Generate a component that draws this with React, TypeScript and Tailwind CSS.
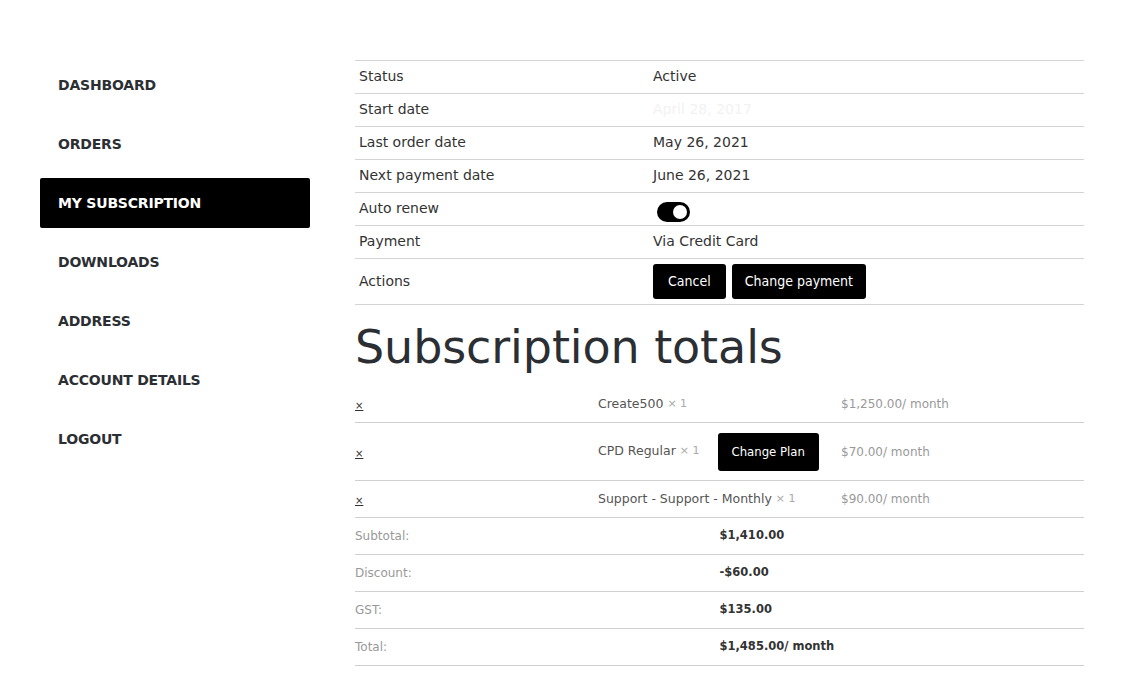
import React from 'react';

const NAV_ITEMS = ['Dashboard', 'Orders', 'My Subscription', 'Downloads', 'Address', 'Account details', 'Logout'];

const DETAILS: { label: string; value: React.ReactNode }[] = [
  { label: 'Status', value: 'Active' },
  { label: 'Start date', value: <span className="text-[#f2f2f2]">April 28, 2017</span> },
  { label: 'Last order date', value: 'May 26, 2021' },
  { label: 'Next payment date', value: 'June 26, 2021' },
  { label: 'Auto renew', value: <Toggle /> },
  { label: 'Payment', value: 'Via Credit Card' },
];

const LINES = [
  { name: 'Create500', price: '$1,250.00', plan: false },
  { name: 'CPD Regular', price: '$70.00', plan: true },
  { name: 'Support - Support - Monthly', price: '$90.00', plan: false },
];

const TOTALS = [
  { label: 'Subtotal:', value: '$1,410.00' },
  { label: 'Discount:', value: '-$60.00' },
  { label: 'GST:', value: '$135.00' },
  { label: 'Total:', value: '$1,485.00/ month' },
];

const BODY_FONT = 'font-["DejaVu_Sans",sans-serif]';
const BTN_FONT = 'font-["Liberation_Sans_Narrow","DejaVu_Sans_Condensed",sans-serif]';

function Toggle(): React.ReactElement {
  return (
    <span className="mt-[9px] ml-[4px] flex h-[20px] w-[33px] items-center justify-end rounded-full bg-black px-[3px]">
      <span className="h-[14px] w-[14px] rounded-full bg-white" />
    </span>
  );
}

function Button({ children, className = '' }: { children: React.ReactNode; className?: string }): React.ReactElement {
  return (
    <button className={`${BTN_FONT} rounded-[3px] bg-black text-white ${className}`}>{children}</button>
  );
}

export default function App(): React.ReactElement {
  return (
    <div className={`${BODY_FONT} min-h-[693px] bg-white pt-[60px] text-[#2b2f33]`}>
      <div className="flex gap-[45px] pl-[40px]">
        {/* sidebar */}
        <nav className="flex w-[270px] shrink-0 flex-col gap-[9px]">
          {NAV_ITEMS.map((item) => {
            const active = item === 'My Subscription';
            return (
              <div
                key={item}
                className={`flex h-[50px] items-center rounded-[2px] pl-[18px] text-[14px] font-bold uppercase tracking-[-0.2px] ${
                  active ? 'bg-black text-white' : 'text-[#2b2f33]'
                }`}
              >
                {item}
              </div>
            );
          })}
        </nav>

        {/* main */}
        <main className="w-[729px]">
          <div className="border-t border-[#d4d4d4]">
            {DETAILS.map((row) => (
              <div key={row.label} className="flex h-[33px] border-b border-[#d4d4d4] text-[14px] leading-[30px] text-[#333]">
                <div className="w-[294px] shrink-0 pl-[4px]">{row.label}</div>
                <div className="pl-[4px]">{row.value}</div>
              </div>
            ))}
            <div className="flex h-[46px] items-center border-b border-[#d4d4d4] text-[14px] text-[#333]">
              <div className="w-[294px] shrink-0 pl-[4px]">Actions</div>
              <div className="flex gap-[6px] pl-[4px]">
                <Button className="h-[35px] px-[15px] text-[14px]">Cancel</Button>
                <Button className="h-[35px] px-[13px] text-[14px]">Change payment</Button>
              </div>
            </div>
          </div>

          <h2 className="mt-[14px] text-[46px] leading-[56px] font-normal tracking-[-0.1px] text-[#2b2f33]">Subscription totals</h2>

          <div className="mt-[11px]">
            {LINES.map((line) => (
              <div
                key={line.name}
                className={`grid grid-cols-3 items-center border-b border-[#d0d0d0] ${line.plan ? 'h-[58px]' : 'h-[37px]'}`}
              >
                <div>
                  <span className="text-[10px] text-[#333] underline">×</span>
                </div>
                <div className="flex items-center text-[12.5px] text-[#555]">
                  <span>{line.name}</span>
                  <span className="ml-[4px] text-[11px] text-[#aaa]">× 1</span>
                  {line.plan && <Button className="ml-[18px] h-[38px] px-[14px] text-[13px]">Change Plan</Button>}
                </div>
                <div className="text-[12px] text-[#999]">{line.price}/ month</div>
              </div>
            ))}
            {TOTALS.map((t) => (
              <div key={t.label} className="grid h-[37px] grid-cols-2 items-center border-b border-[#d0d0d0]">
                <div className="text-[12px] text-[#999]">{t.label}</div>
                <div className="text-[11.5px] font-bold text-[#333]">{t.value}</div>
              </div>
            ))}
          </div>
        </main>
      </div>
    </div>
  );
}
